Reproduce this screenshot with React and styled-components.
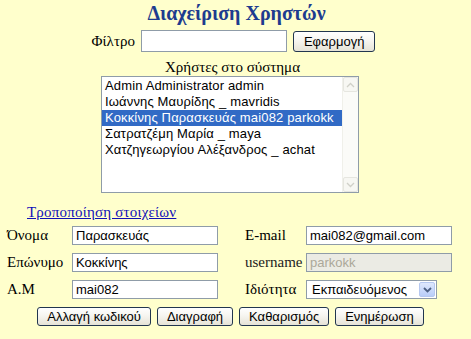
import React, { useState } from "react";
import styled, { createGlobalStyle } from "styled-components";

const GlobalStyle = createGlobalStyle`
  html, body {
    margin: 0;
    padding: 0;
    background: #ffffcc;
  }
  body {
    font-family: "Liberation Serif", "Times New Roman", serif;
    color: #000;
  }
`;

const Page = styled.div`
  width: 471px;
  height: 339px;
  background: #ffffcc;
  overflow: hidden;
`;

const Title = styled.h1`
  margin: 0;
  padding-top: 1px;
  height: 27px;
  line-height: 24px;
  text-align: center;
  font-size: 20px;
  font-weight: bold;
  color: #1d3c8f;
  padding-left: 2px;
`;

const FilterRow = styled.div`
  display: flex;
  align-items: center;
  justify-content: center;
  gap: 6px;
  margin-top: 2px;
  height: 22px;
  padding-right: 4px;
`;

const Label = styled.span`
  font-size: 15px;
  line-height: 18px;
  white-space: nowrap;
`;

const TextInput = styled.input`
  box-sizing: border-box;
  width: ${(p) => p.$w || 146}px;
  height: ${(p) => p.$h || 19}px;
  margin: 0;
  padding: 0 3px;
  border: 1px solid #8f9ca8;
  background: ${(p) => (p.disabled ? "#ebebe4" : "#fff")};
  color: ${(p) => (p.disabled ? "#aca899" : "#000")};
  font-family: "Liberation Sans", Arial, sans-serif;
  font-size: 13px;
  outline: none;
`;

const Button = styled.button`
  box-sizing: border-box;
  height: ${(p) => p.$h || 19}px;
  margin: 0;
  padding: 0 ${(p) => p.$px || 9}px;
  border: 1px solid #22364f;
  border-radius: 3px;
  background: linear-gradient(#ffffff 0%, #f6f5f0 45%, #e6e3d6 100%);
  font-family: "Liberation Sans", Arial, sans-serif;
  font-size: 13px;
  color: #000;
  cursor: pointer;
  white-space: nowrap;
`;

const ListCaption = styled.div`
  text-align: center;
  font-size: 15px;
  line-height: 18px;
  margin-top: 6px;
  padding-right: 6px;
`;

const ListBox = styled.div`
  box-sizing: border-box;
  width: 258px;
  height: 117px;
  margin: 0 0 0 101px;
  border: 1px solid #8f9ca8;
  background: #fff;
  display: flex;
`;

const Items = styled.ul`
  flex: 1;
  list-style: none;
  margin: 0;
  padding: 1px 0 0;
  overflow: hidden;
`;

const Item = styled.li`
  height: 16px;
  line-height: 16px;
  padding-left: 3px;
  font-family: "Liberation Sans", Arial, sans-serif;
  font-size: 13px;
  letter-spacing: 0.15px;
  white-space: nowrap;
  overflow: hidden;
  background: ${(p) => (p.$selected ? "#316ac5" : "transparent")};
  color: ${(p) => (p.$selected ? "#fff" : "#000")};
  cursor: default;
`;

const ScrollBar = styled.div`
  width: 15px;
  display: flex;
  flex-direction: column;
  justify-content: space-between;
  background: #fbfbf8;
  border-left: 1px solid #f0f0ea;
`;

const ScrollArrow = styled.div`
  box-sizing: border-box;
  height: 15px;
  border: 1px solid #e6e6e0;
  border-radius: 2px;
  background: #f7f7f3;
  display: flex;
  align-items: center;
  justify-content: center;
`;

const EditLink = styled.a`
  display: inline-block;
  margin: 10px 0 0 27px;
  font-size: 15px;
  line-height: 18px;
  letter-spacing: 0.2px;
  color: #1010b8;
  text-decoration: underline;
`;

const FormGrid = styled.div`
  display: grid;
  grid-template-columns: 65px 173px 61px 147px;
  row-gap: 8px;
  align-items: center;
  margin: 5px 0 0 7px;
`;

const FieldLabel = styled.label`
  font-size: 15px;
  line-height: 19px;
  white-space: nowrap;
  color: ${(p) => (p.$muted ? "#222" : "#000")};
`;

const SelectWrap = styled.div`
  position: relative;
  width: 131px;
  height: 19px;
`;

const Select = styled.select`
  box-sizing: border-box;
  appearance: none;
  width: 100%;
  height: 100%;
  margin: 0;
  padding: 0 0 0 5px;
  border: 1px solid #8f9ca8;
  background: #fff;
  font-family: "Liberation Sans", Arial, sans-serif;
  font-size: 13px;
  color: #000;
  outline: none;
`;

const DropArrow = styled.span`
  position: absolute;
  top: 2px;
  right: 2px;
  width: 16px;
  height: 15px;
  box-sizing: border-box;
  border: 1px solid #b6c8f0;
  border-radius: 2px;
  background: linear-gradient(#dfe8fd, #b9cdf8);
  display: flex;
  align-items: center;
  justify-content: center;
  pointer-events: none;
`;

const ButtonRow = styled.div`
  display: flex;
  justify-content: center;
  gap: 6px;
  margin-top: 8px;
  padding-right: 10px;
`;

const Chevron = ({ up, color = "#d0d0c8", w = 1.3 }) => (
  <svg width="9" height="6" viewBox="0 0 9 6">
    <path
      d={up ? "M1 5 L4.5 1.5 L8 5" : "M1 1 L4.5 4.5 L8 1"}
      fill="none"
      stroke={color}
      strokeWidth={w}
    />
  </svg>
);

const users = [
  { id: 1, label: "Admin Administrator admin" },
  { id: 2, label: "Ιωάννης Μαυρίδης _ mavridis" },
  { id: 3, label: "Κοκκίνης Παρασκευάς mai082 parkokk" },
  { id: 4, label: "Σατρατζέμη Μαρία _ maya" },
  { id: 5, label: "Χατζηγεωργίου Αλέξανδρος _ achat" },
];

export default function App() {
  const [selected, setSelected] = useState(3);
  const [filter, setFilter] = useState("");

  return (
    <Page>
      <GlobalStyle />
      <Title>Διαχείριση Χρηστών</Title>

      <FilterRow>
        <Label>Φίλτρο</Label>
        <TextInput
          $w={146}
          $h={22}
          value={filter}
          onChange={(e) => setFilter(e.target.value)}
        />
        <Button $h={21} $px={10}>Εφαρμογή</Button>
      </FilterRow>

      <ListCaption>Χρήστες στο σύστημα</ListCaption>
      <ListBox>
        <Items>
          {users.map((u) => (
            <Item
              key={u.id}
              $selected={u.id === selected}
              onClick={() => setSelected(u.id)}
            >
              {u.label}
            </Item>
          ))}
        </Items>
        <ScrollBar>
          <ScrollArrow>
            <Chevron up />
          </ScrollArrow>
          <ScrollArrow>
            <Chevron />
          </ScrollArrow>
        </ScrollBar>
      </ListBox>

      <EditLink href="#">Τροποποίηση στοιχείων</EditLink>

      <FormGrid>
        <FieldLabel>Όνομα</FieldLabel>
        <TextInput defaultValue="Παρασκευάς" />
        <FieldLabel>E-mail</FieldLabel>
        <TextInput defaultValue="mai082@gmail.com" />

        <FieldLabel>Επώνυμο</FieldLabel>
        <TextInput defaultValue="Κοκκίνης" />
        <FieldLabel $muted>username</FieldLabel>
        <TextInput defaultValue="parkokk" disabled />

        <FieldLabel>Α.Μ</FieldLabel>
        <TextInput defaultValue="mai082" />
        <FieldLabel>Ιδιότητα</FieldLabel>
        <SelectWrap>
          <Select defaultValue="student">
            <option value="student">Εκπαιδευόμενος</option>
            <option value="teacher">Εκπαιδευτής</option>
          </Select>
          <DropArrow>
            <Chevron color="#4d6185" w={1.8} />
          </DropArrow>
        </SelectWrap>
      </FormGrid>

      <ButtonRow>
        <Button>Αλλαγή κωδικού</Button>
        <Button>Διαγραφή</Button>
        <Button>Καθαρισμός</Button>
        <Button>Ενημέρωση</Button>
      </ButtonRow>
    </Page>
  );
}
